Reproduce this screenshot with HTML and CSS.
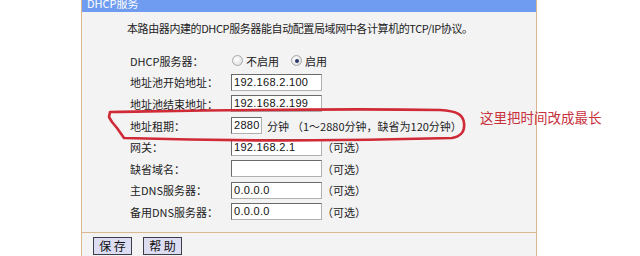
FILE: index.html
```html
<!DOCTYPE html>
<html lang="zh">
<head>
<meta charset="utf-8">
<link rel="stylesheet" href="styles.css">
</head>
<body>
<div class="panel">
  <div class="hdr"><span>DHCP服务</span></div>
  <div class="content">
    <p class="intro">本路由器内建的DHCP服务器能自动配置局域网中各计算机的TCP/IP协议。</p>
    <div class="form">
      <div class="row"><span class="lbl">DHCP服务器：</span><span class="ctl"><span class="radio"></span><span class="rtxt">不启用</span><span class="radio on"></span><span class="rtxt">启用</span></span></div>
      <div class="row"><span class="lbl">地址池开始地址：</span><span class="ctl"><span class="inp">192.168.2.100</span></span></div>
      <div class="row"><span class="lbl">地址池结束地址：</span><span class="ctl"><span class="inp">192.168.2.199</span></span></div>
      <div class="row"><span class="lbl">地址租期：</span><span class="ctl"><span class="inp short">2880</span><span class="unit">分钟</span><span class="hint">（1～2880分钟，缺省为120分钟）</span></span></div>
      <div class="row"><span class="lbl">网关：</span><span class="ctl"><span class="inp">192.168.2.1</span><span class="opt">（可选）</span></span></div>
      <div class="row"><span class="lbl">缺省域名：</span><span class="ctl"><span class="inp"></span><span class="opt">（可选）</span></span></div>
      <div class="row"><span class="lbl">主DNS服务器：</span><span class="ctl"><span class="inp">0.0.0.0</span><span class="opt">（可选）</span></span></div>
      <div class="row"><span class="lbl">备用DNS服务器：</span><span class="ctl"><span class="inp">0.0.0.0</span><span class="opt">（可选）</span></span></div>
    </div>
  </div>
  <div class="foot">
    <span class="btn">保 存</span><span class="btn">帮 助</span>
  </div>
</div>
<svg class="mark" width="640" height="256" viewBox="0 0 640 256">
  <path d="M110 112 C 180 111, 320 108, 440 110 C 458 111, 463 115, 464 123 C 465 131, 462 136, 452 138 C 350 141, 220 141, 124 138 L 117 128 L 112 122 L 109 117 Z" fill="none" stroke="#cf2a36" stroke-width="2.6" stroke-linejoin="round"/>
</svg>
<div class="note">这里把时间改成最长</div>
</body>
</html>
```
FILE: styles.css
```css
html, body {
  margin: 0;
  padding: 0;
  background: #ffffff;
  width: 640px;
  height: 256px;
  overflow: hidden;
  position: relative;
  font-family: "Noto Sans CJK SC", "Liberation Sans", sans-serif;
}
.panel {
  margin-left: 81px;
  width: 454px;
  height: 256px;
  border-left: 1px solid #dcb890;
  border-right: 1px solid #dcb890;
  background: #f3f3f4;
  display: flex;
  flex-direction: column;
}
.hdr {
  height: 12px;
  background: #6f9cf0;
  color: #ffffff;
  font-size: 11px;
  line-height: 6px;
  padding-left: 5px;
  overflow: hidden;
}
.content {
  padding: 0 0 0 45px;
  height: 220px;
}
.intro {
  margin: 0;
  padding-top: 8px;
  font-size: 11px;
  line-height: 16px;
  color: #222;
  letter-spacing: -0.4px;
}
.form {
  margin-top: 14px;
  margin-left: 3px;
  display: flex;
  flex-direction: column;
}
.row {
  height: 21.6px;
  display: flex;
  align-items: center;
  font-size: 11px;
  color: #222;
}
.lbl {
  width: 101px;
  flex: none;
}
.ctl {
  display: flex;
  align-items: center;
}
.radio {
  width: 9px;
  height: 9px;
  border: 1px solid #a8a8a8;
  border-radius: 50%;
  background: radial-gradient(circle at 40% 40%, #ffffff, #d8d8d8);
  margin: 0 3px 0 1px;
  position: relative;
}
.radio.on::after {
  content: "";
  position: absolute;
  left: 2.5px;
  top: 2.5px;
  width: 4px;
  height: 4px;
  border-radius: 50%;
  background: #2a3a6a;
}
.rtxt {
  margin-right: 11px;
}
.inp {
  width: 85px;
  height: 15px;
  border: 1px solid #6a6a6a;
  border-right-color: #b0b0b0;
  border-bottom-color: #b0b0b0;
  background: #fff;
  font-family: "Liberation Sans", sans-serif;
  font-size: 11px;
  line-height: 15px;
  padding: 0 2px;
  letter-spacing: 0.3px;
  color: #111;
}
.inp.short {
  width: 25px;
}
.unit {
  margin-left: 5px;
}
.hint {
  margin-left: 3px;
}
.opt {
  margin-left: 0;
}
.foot {
  border-top: 1px solid #dcb890;
  padding: 4px 0 0 11px;
  display: flex;
  gap: 11px;
}
.btn {
  width: 37px;
  height: 16px;
  border: 1px solid #3d3d4a;
  background: #dcdcf2;
  font-size: 12px;
  line-height: 16px;
  text-align: center;
  color: #111;
}
.mark {
  position: absolute;
  left: 0;
  top: 0;
  pointer-events: none;
}
.note {
  position: absolute;
  left: 480px;
  top: 109px;
  font-size: 13.5px;
  line-height: 17px;
  color: #c8303c;
  white-space: nowrap;
}
```
